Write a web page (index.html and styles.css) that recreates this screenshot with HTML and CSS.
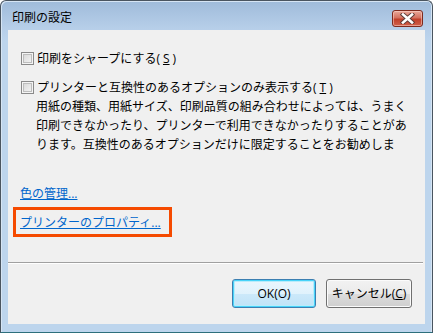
FILE: index.html
```html
<!DOCTYPE HTML>
<html lang="ja-JP">
<head>
<meta charset="UTF-8">
<title>印刷の設定</title>
<link rel="stylesheet" href="styles.css">
</head>
<body>
  <div class="window">
    <div class="titleBar">
      <span class="titleText">印刷の設定</span>
      <span class="closeBtn">
        <svg width="17" height="11" viewBox="0 0 17 11">
          <path d="M4 1.5 L13 9.5 M13 1.5 L4 9.5" stroke="#5a3a36" stroke-width="4.4" stroke-linecap="square" fill="none"/>
          <path d="M4 1.5 L13 9.5 M13 1.5 L4 9.5" stroke="#fff" stroke-width="2.6" stroke-linecap="square" fill="none"/>
        </svg>
      </span>
    </div>
    <div class="client">
      <label class="checkRow first"><span class="checkBox"></span>印刷をシャープにする(<u>S</u>)</label>
      <label class="checkRow"><span class="checkBox"></span>プリンターと互換性のあるオプションのみ表示する(<u>T</u>)</label>
      <p class="desc">用紙の種類、用紙サイズ、印刷品質の組み合わせによっては、うまく<br>印刷できなかったり、プリンターで利用できなかったりすることがあ<br>ります。互換性のあるオプションだけに限定することをお勧めしま</p>
      <a class="link colorLink" href="#">色の管理...</a>
      <div class="highlight"><a class="link" href="#">プリンターのプロパティ...</a></div>
      <div class="separator"></div>
      <div class="buttons">
        <span class="btn okBtn">OK(O)</span>
        <span class="btn">キャンセル(<u>C</u>)</span>
      </div>
    </div>
  </div>
</body>
</html>
```

FILE: styles.css
```css
* { margin: 0; padding: 0; box-sizing: border-box; }
body {
  background: #fff;
  font-family: "Open Sans", "Noto Sans CJK JP", sans-serif;
  font-size: 12px;
  color: #000;
}
.window {
  width: 433px;
  height: 333px;
  border: 1px solid #4a5560;
  border-bottom-color: #2d6f7c;
  border-radius: 6px 6px 0 0;
  background: linear-gradient(#9fbbda, #b7cfe9 28px, #bdd5ed 40px, #bdd5ed);
  box-shadow: inset 1px 1px 0 #d6e5f4, inset -1px 0 0 #d6e5f4;
  display: flex;
  flex-direction: column;
}
.titleBar {
  height: 29px;
  display: flex;
  align-items: flex-start;
  padding-left: 11px;
}
.titleText {
  margin-top: 7px;
  line-height: 19px;
  font-size: 12px;
}
.closeBtn {
  margin-left: auto;
  margin-right: 9px;
  margin-top: 9px;
  width: 31px;
  height: 17px;
  border: 1px solid #7d2a1e;
  border-radius: 3px;
  background: linear-gradient(#e9a99a, #d47160 45%, #c0402a 55%, #d0604a);
  box-shadow: inset 0 0 0 1px rgba(255, 220, 210, 0.5);
  display: flex;
  align-items: center;
  justify-content: center;
}
.closeBtn svg { display: block; }
.client {
  margin: 0 7px;
  height: 294px;
  background: #f0f0f0;
  display: flex;
  flex-direction: column;
  line-height: 19px;
}
.checkRow {
  display: flex;
  align-items: center;
  gap: 3px;
  padding-left: 13px;
  margin-top: 10px;
  height: 19px;
}
.checkRow.first { margin-top: 19px; }
.checkBox {
  width: 13px;
  height: 13px;
  border: 1px solid #8a8a8a;
  background: linear-gradient(135deg, #d4d4d4, #f8f8f8);
  box-shadow: inset 0 0 0 1px #f4f4f4, inset 0 0 0 2px #bdbdbd;
}
.desc {
  padding-left: 28px;
  height: 57px;
  white-space: nowrap;
}
.link {
  color: #0066cc;
  text-decoration: underline;
}
.colorLink {
  margin-top: 30px;
  margin-left: 12px;
  align-self: flex-start;
}
.highlight {
  margin-top: 4px;
  margin-left: 5px;
  width: 159px;
  height: 30px;
  border: 3px solid #f54a00;
  padding-left: 4px;
  display: flex;
  align-items: center;
}
.separator {
  margin-top: 25px;
  margin-right: 2px;
  height: 2px;
  border-top: 1px solid #a0a0a0;
  border-bottom: 1px solid #ffffff;
}
.buttons {
  margin-top: 15px;
  display: flex;
  justify-content: flex-end;
  gap: 10px;
  padding-right: 13px;
}
.btn {
  width: 86px;
  height: 29px;
  border: 1px solid #707070;
  border-radius: 3px;
  background: linear-gradient(#f2f2f2, #ebebeb 50%, #dddddd 50%, #cfcfcf);
  box-shadow: inset 0 0 0 1px #fbfbfb;
  display: flex;
  align-items: center;
  justify-content: center;
}
.okBtn {
  width: 84px;
  border-color: #3c7fb1;
  background: linear-gradient(#eaf6fd, #e0f2fc 50%, #cce9fa 50%, #bfe3f7);
  box-shadow: inset 0 0 0 1px #48d3f9, inset 0 0 0 2px #b9ecfb;
}
```
